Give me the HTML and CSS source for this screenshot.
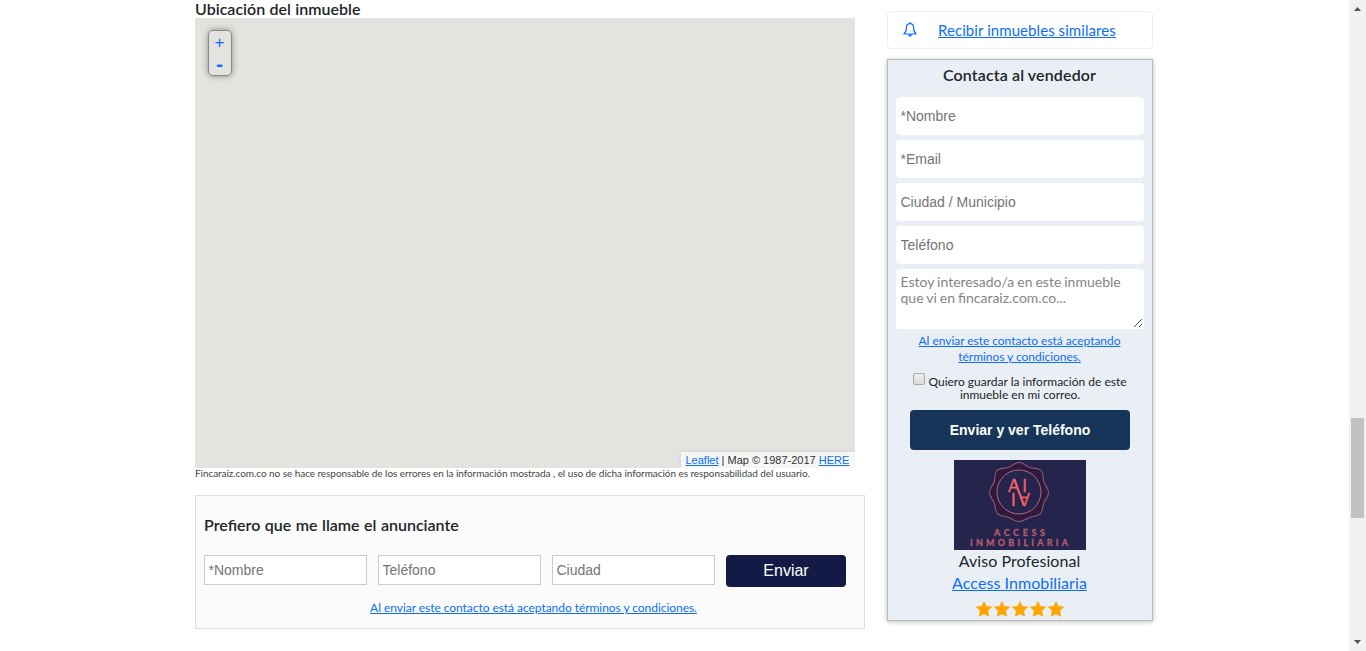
FILE: index.html
```html
<!DOCTYPE html>
<html lang="es">
<head>
<meta charset="utf-8">
<title>Inmueble</title>
<link rel="stylesheet" href="styles.css">
</head>
<body>
<div class="page">
  <main class="main">
    <h2 class="map-title">Ubicación del inmueble</h2>
    <div class="map">
      <div class="zoom"><a class="zoom-btn">+</a><a class="zoom-btn minus">-</a></div>
      <div class="attribution"><a class="link">Leaflet</a> | Map © 1987-2017 <a class="link">HERE</a></div>
    </div>
    <p class="disclaimer">Fincaraiz.com.co no se hace responsable de los errores en la información mostrada , el uso de dicha información es responsabilidad del usuario.</p>
    <form class="call-box">
      <h3 class="call-title">Prefiero que me llame el anunciante</h3>
      <div class="call-row">
        <input class="call-input" placeholder="*Nombre">
        <input class="call-input" placeholder="Teléfono">
        <input class="call-input" placeholder="Ciudad">
        <button class="call-button" type="button">Enviar</button>
      </div>
      <a class="link call-terms">Al enviar este contacto está aceptando términos y condiciones.</a>
    </form>
  </main>
  <aside class="side">
    <div class="similar">
      <svg class="bell" viewBox="0 0 14 15"><path d="M7 1.700C4.600 1.700 3.400 3.400 3.400 5.700C3.400 8.800 2.800 10.400 .9 12H13.100C11.200 10.400 10.600 8.800 10.600 5.700C10.600 3.400 9.400 1.700 7 1.700Z" fill="none" stroke="#0a6efa" stroke-width="1.200" stroke-linejoin="round"/><path d="M7 .3V1.800" stroke="#0a6efa" stroke-width="1.300"/><path d="M5 12.400H9C8.800 15.300 5.200 15.300 5 12.400Z" fill="#0a6efa"/></svg>
      <a class="link similar-link">Recibir inmuebles similares</a>
    </div>
    <form class="contact">
      <h3 class="contact-title">Contacta al vendedor</h3>
      <input class="contact-input" placeholder="*Nombre">
      <input class="contact-input" placeholder="*Email">
      <input class="contact-input" placeholder="Ciudad / Municipio">
      <input class="contact-input" placeholder="Teléfono">
      <div class="message">Estoy interesado/a en este inmueble<br>que vi en fincaraiz.com.co...
        <svg class="grip" viewBox="0 0 10 10"><path d="M1 9L9 1M6 9L9 6" stroke="#555" stroke-width="1"/></svg>
      </div>
      <a class="link terms">Al enviar este contacto está aceptando<br>términos y condiciones.</a>
      <div class="save"><span class="check"></span><span>Quiero guardar la información de este</span></div>
      <div class="save-second">inmueble en mi correo.</div>
      <button class="send" type="button">Enviar y ver Teléfono</button>
      <svg class="logo" viewBox="0 0 132 90">
        <rect width="132" height="90" fill="#24244d"/>
        <path d="M65 2.500C70 2.500 71 6 76 7.500C81 9 85 7.500 87.500 11C90.500 15 88 18 90 22.500C92 27 94.500 28 94.500 32.500C94.500 37 92 38 90 42.500C88 47 89.500 50 86.500 53.500C83 57 80 55.500 75.500 57.500C71 59.500 69.500 61.500 65 61.500C60.500 61.500 59 59.500 54.500 57.500C50 55.500 47 57 43.500 53.500C40.500 50 42 47 40 42.500C38 38 35.500 37 35.500 32.500C35.500 28 38 27 40 22.500C42 18 39.500 15 42.500 11C45 7.500 49 9 54 7.500C59 6 60 2.500 65 2.500Z" fill="#31193c" stroke="#8b5878" stroke-width="1.100"/>
        <circle cx="65" cy="32" r="22" fill="#24244d" stroke="#ad6b82" stroke-width="1"/>
        <g class="monogram"><text x="54" y="31.500" textLength="19" lengthAdjust="spacing">AI</text><text x="54" y="31.500" textLength="19" lengthAdjust="spacing" transform="rotate(180 65 32)">AI</text><path d="M60.500 19L69.500 45" stroke="#f06264" stroke-width="1.700"/></g>
        <g class="logo-name"><text x="40" y="75.500" textLength="51">ACCESS</text><text x="16" y="86" textLength="98">INMOBILIARIA</text></g>
      </svg>
      <div class="kind">Aviso Profesional</div>
      <a class="link agency">Access Inmobiliaria</a>
      <div class="stars">
        <svg class="star" viewBox="0 0 16 16"><path d="M8 .7L10.200 5.400L15.500 6.100L11.700 9.800L12.600 15.200L8 12.700L3.400 15.200L4.300 9.800L.5 6.100L5.800 5.400Z"/></svg>
        <svg class="star" viewBox="0 0 16 16"><path d="M8 .7L10.200 5.400L15.500 6.100L11.700 9.800L12.600 15.200L8 12.700L3.400 15.200L4.300 9.800L.5 6.100L5.800 5.400Z"/></svg>
        <svg class="star" viewBox="0 0 16 16"><path d="M8 .7L10.200 5.400L15.500 6.100L11.700 9.800L12.600 15.200L8 12.700L3.400 15.200L4.300 9.800L.5 6.100L5.800 5.400Z"/></svg>
        <svg class="star" viewBox="0 0 16 16"><path d="M8 .7L10.200 5.400L15.500 6.100L11.700 9.800L12.600 15.200L8 12.700L3.400 15.200L4.300 9.800L.5 6.100L5.800 5.400Z"/></svg>
        <svg class="star" viewBox="0 0 16 16"><path d="M8 .7L10.200 5.400L15.500 6.100L11.700 9.800L12.600 15.200L8 12.700L3.400 15.200L4.300 9.800L.5 6.100L5.800 5.400Z"/></svg>
      </div>
    </form>
  </aside>
  <div class="scrollbar">
    <svg class="arrow" viewBox="0 0 17 17"><path d="M5 11L8.500 7L12 11Z" fill="#505050"/></svg>
    <div class="thumb"></div>
    <svg class="arrow" viewBox="0 0 17 17"><path d="M5 6L8.500 10L12 6Z" fill="#505050"/></svg>
  </div>
</div>
</body>
</html>
```
FILE: styles.css
```css
* { box-sizing: border-box; }
body { margin: 0; overflow: hidden; background: #fff; color: #212529; font-family: Lato, "Liberation Sans", sans-serif; }
h2, h3, p { margin: 0; }
.page { display: flex; height: 651px; padding-left: 195px; }
.main { width: 670px; }
.link { color: #0a6efa; text-decoration: underline; }
.map-title { height: 18px; font-size: 16px; line-height: 18px; font-weight: 600; word-spacing: .4px; white-space: nowrap; }
.map { display: flex; flex-direction: column; justify-content: space-between; width: 660px; height: 450px; padding: 12px 0 0 13px; background: #e4e3df; }
.zoom { display: flex; flex-direction: column; width: 24px; height: 46px; border: 1px solid #888; border-radius: 5px; box-shadow: 0 0 6px rgba(0,0,0,.4); }
.zoom-btn { height: 22px; padding-right: 1px; color: #0a6efa; font: 17px/24px "Liberation Sans", sans-serif; text-align: center; }
.minus { font-weight: bold; font-size: 21px; line-height: 22px; }
.attribution { align-self: flex-end; width: 174px; height: 16px; padding-left: 4.5px; background: #f6f6f5; box-shadow: 0 0 4px #ccc; clip-path: inset(-4px 0 0 -4px); color: #333; font: 11px/17px "Liberation Sans", sans-serif; white-space: nowrap; }
.disclaimer { height: 27px; color: #444; font-size: 10px; line-height: 11px; letter-spacing: -.057px; white-space: nowrap; }
.call-box { display: flex; flex-direction: column; height: 134px; padding: 20px 8px 0; border: 1px solid #ddd; background: #fbfbfb; }
.call-title { height: 39px; font-size: 16px; line-height: 18px; font-weight: 600; word-spacing: .5px; }
.call-row { display: flex; gap: 11px; height: 45px; }
.call-input { width: 163px; height: 30px; margin: 0; padding: 0 3.5px; border: 1px solid #ccc; background: #fff; font: 14px "Liberation Sans", sans-serif; }
.call-input::placeholder, .contact-input::placeholder { color: #757575; }
.call-button { width: 120px; height: 32px; padding: 0; border: 0; border-radius: 4px; background: #131a45; color: #fff; font: 16px "Liberation Sans", sans-serif; }
.call-terms { align-self: center; margin-left: 7px; font-size: 12px; line-height: 16px; letter-spacing: -.05px; }
.side { width: 266px; margin-left: 22px; padding-top: 11px; }
.similar { display: flex; align-items: center; height: 38px; padding-left: 15px; border: 1px solid #eaeff6; border-radius: 4px; }
.bell { width: 14px; height: 15px; margin-bottom: 2px; }
.similar-link { margin-left: 21px; font-size: 15px; line-height: 20px; letter-spacing: .07px; white-space: nowrap; }
.contact { display: flex; flex-direction: column; align-items: center; height: 562px; margin-top: 10px; padding: 6px 8px 0; border: 1px solid #bbb; background: #eaeff6; box-shadow: 0 1px 5px rgba(0,0,0,.25); }
.contact-title { height: 31px; margin-right: 1px; font-size: 16px; line-height: 18px; font-weight: 600; letter-spacing: .13px; }
.contact-input { width: 248px; height: 38px; margin: 0 0 5px; padding: 0 4.5px; border: 0; border-radius: 4px; background: #fff; font: 14px "Liberation Sans", sans-serif; }
.message { position: relative; width: 248px; height: 60px; padding: 5px 4.5px; border-radius: 4px; background: #fff; color: #858585; font-size: 14px; line-height: 16px; word-spacing: -.6px; white-space: nowrap; }
.grip { position: absolute; right: 1px; bottom: 1px; width: 10px; height: 10px; }
.terms { height: 44px; margin-right: 1px; padding-top: 4px; font-size: 12px; line-height: 16px; letter-spacing: -.04px; text-align: center; }
.save { display: flex; gap: 3px; height: 16px; font-size: 12px; line-height: 17px; white-space: nowrap; }
.check { width: 12px; height: 12px; border: 1px solid #aaa; border-radius: 2px; background: linear-gradient(#eee, #dcdcdc); }
.save-second { height: 21px; font-size: 12px; line-height: 12px; }
.send { flex: none; width: 220px; height: 40px; margin-bottom: 10px; padding: 0; border: 0; border-radius: 4px; background: #163559; color: #fff; font: bold 14px "Liberation Sans", sans-serif; }
.logo { flex: none; width: 132px; height: 90px; }
.monogram { fill: #f06264; stroke: #f06264; stroke-width: .3px; font: 17px Lato, sans-serif; }
.logo-name { fill: #b65b6d; stroke: #b65b6d; stroke-width: .3px; font: bold 9px Lato, sans-serif; }
.kind { height: 22px; margin-right: 1px; font-size: 16px; line-height: 22px; letter-spacing: .07px; }
.agency { height: 26px; margin-right: 1px; font-size: 16px; line-height: 22px; letter-spacing: .07px; }
.stars { display: flex; gap: 2px; margin: 3px 1px 0 0; }
.star { width: 16px; height: 16px; fill: #ffa500; stroke: #ffa500; stroke-width: .8; stroke-linejoin: round; }
.scrollbar { display: flex; flex-direction: column; align-items: center; width: 17px; margin-left: auto; background: #f1f1f1; }
.arrow { width: 17px; height: 17px; }
.thumb { width: 13px; height: 100px; margin-top: 401px; margin-bottom: auto; background: #c1c1c1; }
```
